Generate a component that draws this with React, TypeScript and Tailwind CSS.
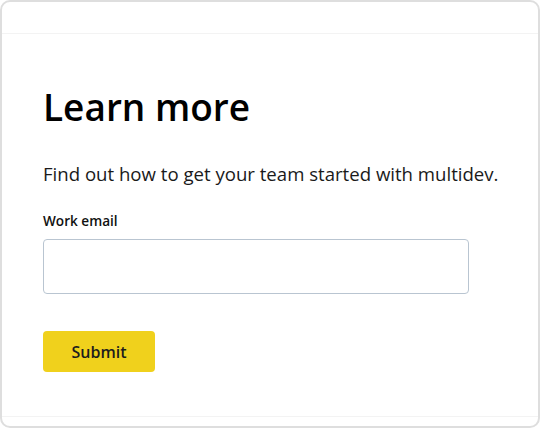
export default function App() {
  return (
    <div className="w-[540px] h-[428px] bg-white p-0" style={{ fontFamily: '"Open Sans", sans-serif' }}>
      <div className="h-[428px] border-2 border-[#dedede] rounded-[10px] flex flex-col overflow-hidden">
        {/* Top bar */}
        <div className="h-[32px] border-b border-[#f3f3f3] shrink-0" />

        {/* Form */}
        <div className="flex-1 pl-[41px] pr-[20px] pt-[51px]">
          <h2 className="text-[37px] leading-[44px] font-semibold text-black">Learn more</h2>
          <p className="mt-[33px] text-[18.6px] leading-[24px] text-[#1a1a1a] whitespace-nowrap">
            Find out how to get your team started with multidev.
          </p>
          <label className="block mt-[26px] text-[13.6px] leading-[18px] font-semibold text-[#111]">Work email</label>
          <input
            type="email"
            className="block mt-[9px] w-[426px] h-[55px] border border-[#b9c5d1] rounded-[4px] outline-none px-3"
          />
          <button className="mt-[37px] w-[112px] h-[41px] bg-[#f0d11c] rounded-[4px] text-[16px] font-semibold text-[#1d1d1d]">
            Submit
          </button>
        </div>

        {/* Bottom bar */}
        <div className="h-[10px] border-t border-[#f3f3f3] shrink-0" />
      </div>
    </div>
  )
}
